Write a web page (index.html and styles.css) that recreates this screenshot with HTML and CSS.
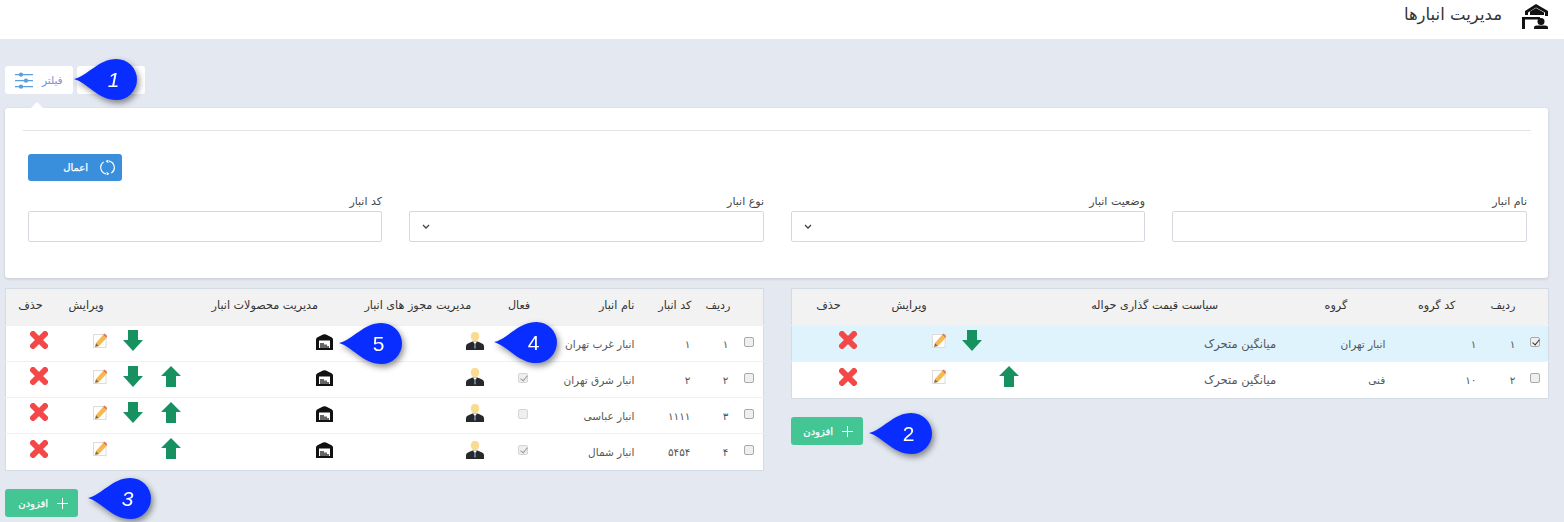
FILE: index.html
```html
<!DOCTYPE html>
<html lang="fa" dir="rtl">
<head>
    <meta charset="UTF-8" />
    <title>مدیریت انبارها</title>
    <link rel="stylesheet" href="styles.css">
</head>
<body>
    <svg class="sprites" aria-hidden="true">
        <symbol id="i-down" viewBox="0 0 20 21"><path d="M5 0h10v10h5L10 21 0 10h5z" fill="#16915f"/></symbol>
        <symbol id="i-up" viewBox="0 0 20 21"><path d="M10 0l10 10h-5v11H5V10H0z" fill="#16915f"/></symbol>
        <symbol id="i-del" viewBox="0 0 18 18"><path d="M3 3l12 12M15 3L3 15" stroke="#f44848" stroke-width="6" stroke-linecap="round"/></symbol>
        <symbol id="i-edit" viewBox="0 0 14 15">
            <rect x=".5" y="1.500" width="12.500" height="13" fill="#fff" stroke="#dcdcdc"/>
            <path d="M3 10l7-8 3.500 3-7.500 8z" fill="#f6b94e"/>
            <path d="M10 2l1.500-1.500L14 3l-.5 2z" fill="#e8744a"/>
            <path d="M3 10l-1 4 4-1z" fill="#8a6a3a"/>
        </symbol>
        <symbol id="i-user" viewBox="0 0 18 18">
            <ellipse cx="9" cy="4.500" rx="4.200" ry="4.800" fill="#f8dc92"/>
            <path d="M0 18v-4q0-2 3-3l3.500-1.500h5L15 11q3 1 3 3v4z" fill="#26282b"/>
            <path d="M7 9.500h4l-2 3z" fill="#fff"/>
            <path d="M8.300 11.500h1.400l.3 4-1 1.500-1-1.500z" fill="#6d84a8"/>
        </symbol>
        <symbol id="i-store" viewBox="0 0 17 16">
            <path d="M0 5.500Q0 4 1.500 3.300L7 .5q1.500-.7 3 0l5.500 2.800Q17 4 17 5.500V16H0z" fill="#111"/>
            <path d="M3 6.500h11V14H3z" fill="#fff"/>
            <path d="M4 9h4v1.500h3V12h2v2H4z" fill="#666"/>
        </symbol>
    </svg>

    <header class="topbar">
        <svg class="topbar-icon" viewBox="0 0 27 26" fill="#111">
            <path d="M3 12V8l11-7 12 7v5h-3V9.500L14 4.500 6 9.500V12z"/>
            <path d="M8 8.500L14 5l8 4.500V12H8z"/>
            <path d="M0 14h18v2.500H3V26H0z"/>
            <circle cx="19" cy="18.500" r="3.500"/>
            <path d="M12 26v-1.500q0-2 3-2h8q3 0 3 2V26z"/>
        </svg>
        <h1 class="topbar-title">مدیریت انبارها</h1>
    </header>

    <main class="content">
        <div class="tabs">
            <a class="tab tab-filter">
                <svg class="tab-icon" viewBox="0 0 18 17" fill="#5aa0e0">
                    <path d="M0 2h18v1.200H0zM0 8h18v1.200H0zM0 14h18v1.200H0z"/>
                    <circle cx="6" cy="2.600" r="2.200"/><circle cx="11" cy="8.600" r="2.200"/><circle cx="6" cy="14.600" r="2.200"/>
                </svg>
                <span>فیلتر</span>
            </a>
            <a class="tab"></a>
        </div>

        <section class="panel">
            <hr class="panel-line">
            <div class="panel-actions">
                <button class="btn btn-apply">
                    <svg class="btn-icon" viewBox="0 0 16 16" fill="none" stroke="#fff" stroke-width="1.200">
                        <path d="M9.500 1.200A7 7 0 0 1 12 14M6.500 14.800A7 7 0 0 1 4 2"/>
                        <path d="M9 0l-2 1.300 2 1.500M7 16l2-1.300-2-1.500"/>
                    </svg>
                    <span>اعمال</span>
                </button>
            </div>
            <form class="filters">
                <label class="field">نام انبار<input type="text"></label>
                <label class="field">وضعیت انبار<select></select></label>
                <label class="field">نوع انبار<select></select></label>
                <label class="field">کد انبار<input type="text"></label>
            </form>
        </section>

        <div class="columns">
            <section class="col">
                <table class="grid grid-groups">
                    <colgroup>
                        <col class="w28"><col class="w40"><col class="w90"><col class="w110"><col class="w250"><col class="w40"><col class="w40"><col class="w90"><col class="w68">
                    </colgroup>
                    <thead>
                        <tr>
                            <th></th>
                            <th class="pr5">ردیف</th>
                            <th class="pr25">کد گروه</th>
                            <th class="pr43">گروه</th>
                            <th class="pr62">سیاست قیمت گذاری حواله</th>
                            <th></th>
                            <th></th>
                            <th class="pr23">ویرایش</th>
                            <th class="pr19">حذف</th>
                        </tr>
                    </thead>
                    <tbody>
                        <tr class="selected">
                            <td class="pr8"><input type="checkbox" class="check" checked></td>
                            <td class="pr5">۱</td>
                            <td class="pr4">۱</td>
                            <td class="pr5">انبار تهران</td>
                            <td class="pr4 policy">میانگین متحرک</td>
                            <td></td>
                            <td class="pr8"><svg class="ico-arrow"><use href="#i-down"/></svg></td>
                            <td class="pr4"><svg class="ico-edit"><use href="#i-edit"/></svg></td>
                            <td class="pr3"><svg class="ico-del"><use href="#i-del"/></svg></td>
                        </tr>
                        <tr>
                            <td class="pr8"><input type="checkbox" class="check"></td>
                            <td class="pr5">۲</td>
                            <td class="pr4">۱۰</td>
                            <td class="pr5">فنی</td>
                            <td class="pr4 policy">میانگین متحرک</td>
                            <td class="pr11"><svg class="ico-arrow"><use href="#i-up"/></svg></td>
                            <td></td>
                            <td class="pr4"><svg class="ico-edit"><use href="#i-edit"/></svg></td>
                            <td class="pr3"><svg class="ico-del"><use href="#i-del"/></svg></td>
                        </tr>
                    </tbody>
                </table>
                <div class="add-row">
                    <button class="btn btn-add btn-add-narrow"><span class="plus"></span><span>افزودن</span></button>
                </div>
            </section>

            <section class="col">
                <table class="grid grid-stores">
                    <colgroup>
                        <col class="w28"><col class="w35"><col class="w60"><col class="w100"><col class="w50"><col class="w150"><col class="w155"><col class="w35"><col class="w38"><col class="w57"><col class="w49">
                    </colgroup>
                    <thead>
                        <tr>
                            <th></th>
                            <th class="pr5">ردیف</th>
                            <th class="pr9">کد انبار</th>
                            <th class="pr6">نام انبار</th>
                            <th class="pr10">فعال</th>
                            <th class="pr19">مدیریت مجوز های انبار</th>
                            <th class="pr22">مدیریت محصولات انبار</th>
                            <th></th>
                            <th></th>
                            <th class="pr8">ویرایش</th>
                            <th class="pr12">حذف</th>
                        </tr>
                    </thead>
                    <tbody>
                        <tr>
                            <td class="pr9"><input type="checkbox" class="check"></td>
                            <td class="pr7">۱</td>
                            <td class="pr10">۱</td>
                            <td class="pr6">انبار غرب تهران</td>
                            <td class="pr12"></td>
                            <td class="pr6"><svg class="ico-user"><use href="#i-user"/></svg></td>
                            <td class="pr7"><svg class="ico-store"><use href="#i-store"/></svg></td>
                            <td></td>
                            <td class="pr7"><svg class="ico-arrow"><use href="#i-down"/></svg></td>
                            <td class="pr5"><svg class="ico-edit"><use href="#i-edit"/></svg></td>
                            <td class="pr7"><svg class="ico-del"><use href="#i-del"/></svg></td>
                        </tr>
                        <tr>
                            <td class="pr9"><input type="checkbox" class="check"></td>
                            <td class="pr7">۲</td>
                            <td class="pr10">۲</td>
                            <td class="pr6">انبار شرق تهران</td>
                            <td class="pr12"><input type="checkbox" class="check check-off" checked disabled></td>
                            <td class="pr6"><svg class="ico-user"><use href="#i-user"/></svg></td>
                            <td class="pr7"><svg class="ico-store"><use href="#i-store"/></svg></td>
                            <td class="pr4"><svg class="ico-arrow"><use href="#i-up"/></svg></td>
                            <td class="pr7"><svg class="ico-arrow"><use href="#i-down"/></svg></td>
                            <td class="pr5"><svg class="ico-edit"><use href="#i-edit"/></svg></td>
                            <td class="pr7"><svg class="ico-del"><use href="#i-del"/></svg></td>
                        </tr>
                        <tr>
                            <td class="pr9"><input type="checkbox" class="check"></td>
                            <td class="pr7">۳</td>
                            <td class="pr10">۱۱۱۱</td>
                            <td class="pr6">انبار عباسی</td>
                            <td class="pr12"><input type="checkbox" class="check check-off" disabled></td>
                            <td class="pr6"><svg class="ico-user"><use href="#i-user"/></svg></td>
                            <td class="pr7"><svg class="ico-store"><use href="#i-store"/></svg></td>
                            <td class="pr4"><svg class="ico-arrow"><use href="#i-up"/></svg></td>
                            <td class="pr7"><svg class="ico-arrow"><use href="#i-down"/></svg></td>
                            <td class="pr5"><svg class="ico-edit"><use href="#i-edit"/></svg></td>
                            <td class="pr7"><svg class="ico-del"><use href="#i-del"/></svg></td>
                        </tr>
                        <tr>
                            <td class="pr9"><input type="checkbox" class="check"></td>
                            <td class="pr7">۴</td>
                            <td class="pr10">۵۴۵۴</td>
                            <td class="pr6">انبار شمال</td>
                            <td class="pr12"><input type="checkbox" class="check check-off" checked disabled></td>
                            <td class="pr6"><svg class="ico-user"><use href="#i-user"/></svg></td>
                            <td class="pr7"><svg class="ico-store"><use href="#i-store"/></svg></td>
                            <td class="pr4"><svg class="ico-arrow"><use href="#i-up"/></svg></td>
                            <td></td>
                            <td class="pr5"><svg class="ico-edit"><use href="#i-edit"/></svg></td>
                            <td class="pr7"><svg class="ico-del"><use href="#i-del"/></svg></td>
                        </tr>
                    </tbody>
                </table>
                <div class="add-row">
                    <button class="btn btn-add"><span class="plus"></span><span>افزودن</span></button>
                </div>
            </section>
        </div>
    </main>

    <!-- numbered help markers over the page -->
    <div class="marker m1"><svg viewBox="0 0 63 41"><path d="M0 20C14 17 24 0 42.500 0a20.500 20.500 0 0 1 0 41C24 41 14 24 0 20z"/></svg><b class="slant">1</b></div>
    <div class="marker m2"><svg viewBox="0 0 63 41"><path d="M0 20C14 17 24 0 42.500 0a20.500 20.500 0 0 1 0 41C24 41 14 24 0 20z"/></svg><b>2</b></div>
    <div class="marker m3"><svg viewBox="0 0 63 41"><path d="M0 20C14 17 24 0 42.500 0a20.500 20.500 0 0 1 0 41C24 41 14 24 0 20z"/></svg><b class="slant">3</b></div>
    <div class="marker m4"><svg viewBox="0 0 63 41"><path d="M0 20C14 17 24 0 42.500 0a20.500 20.500 0 0 1 0 41C24 41 14 24 0 20z"/></svg><b>4</b></div>
    <div class="marker m5"><svg viewBox="0 0 63 41"><path d="M0 20C14 17 24 0 42.500 0a20.500 20.500 0 0 1 0 41C24 41 14 24 0 20z"/></svg><b>5</b></div>
</body>
</html>
```
FILE: styles.css
```css
* {
    box-sizing: border-box;
}

body {
    margin: 0;
    height: 522px;
    overflow: hidden;
    position: relative;
    background: #e4e8f0;
    color: #444;
    font-family: "DejaVu Sans", "Noto Sans", sans-serif;
    font-size: 10px;
}

.sprites {
    display: none;
}

.topbar {
    display: flex;
    align-items: flex-start;
    gap: 20px;
    height: 39px;
    padding: 3px 15px 0 0;
    background: #fff;
}

.topbar-icon {
    width: 27px;
    height: 26px;
}

.topbar-title {
    margin: 2px 0 0;
    font-size: 16.500px;
    font-weight: normal;
    color: #333;
}

.content {
    padding: 27px 15px 0 5px;
}

.tabs {
    display: flex;
    justify-content: flex-end;
    flex-direction: row-reverse;
    direction: ltr;
    gap: 4px;
}

.tab {
    display: flex;
    align-items: center;
    gap: 9px;
    width: 68px;
    height: 28px;
    padding-left: 10px;
    background: #fff;
    border-radius: 3px;
    color: #6f8fdc;
    font-size: 10.500px;
}

.tab-filter {
    position: relative;
    order: 2;
}

.tab-filter::after {
    content: "";
    position: absolute;
    left: 26px;
    top: 36px;
    border: 6px solid transparent;
    border-top: 0;
    border-bottom-color: #fff;
}

.tab-icon {
    width: 18px;
    height: 17px;
}

.panel {
    margin-top: 14px;
    height: 170px;
    padding: 22px 17px 0 18px;
    background: #fff;
    border-radius: 3px;
    margin-right: 1px;
    box-shadow: 0 1px 3px rgba(0, 0, 0, .15);
}

.panel-line {
    margin: 0;
    border: 0;
    border-top: 1px solid #e3e3e3;
}

.panel-actions {
    display: flex;
    justify-content: flex-end;
    margin: 23px 0 0;
    padding-left: 5px;
}

.btn {
    display: flex;
    align-items: center;
    direction: rtl;
    border: 0;
    border-radius: 3px;
    color: #fff;
    font-family: inherit;
    font-size: 10px;
    font-weight: normal;
    -webkit-text-stroke: .25px #fff;
    padding: 0;
}

.btn-apply {
    width: 94px;
    height: 27px;
    gap: 12px;
    padding-right: 7px;
    background: #3a8fdc;
}

.btn-icon {
    width: 15px;
    height: 15px;
}

.filters {
    display: grid;
    grid-template-columns: 355px 354px 355px 354px;
    column-gap: 27px;
    margin-top: 11px;
    padding: 0 4px 0 5px;
}

.field {
    display: block;
    font-size: 11px;
    line-height: 19px;
}

.field input,
.field select {
    display: block;
    width: 100%;
    height: 31px;
    border: 1px solid #d5d9df;
    border-radius: 2px;
    background-color: #fff;
    appearance: none;
}

.field select {
    background-image: url("data:image/svg+xml,%3Csvg xmlns='http://www.w3.org/2000/svg' width='8' height='5'%3E%3Cpath d='M1 1l3 3 3-3' fill='none' stroke='%23444' stroke-width='1.300'/%3E%3C/svg%3E");
    background-repeat: no-repeat;
    background-position: left 12px center;
}

.columns {
    display: grid;
    grid-template-columns: 758px 759px;
    column-gap: 27px;
    margin-top: 10px;
}

.grid {
    width: 100%;
    table-layout: fixed;
    border-collapse: collapse;
    background: #fff;
    border: 1px solid #d4dbe2;
}

.grid th,
.grid td {
    padding: 0;
    text-align: right;
    white-space: nowrap;
}

.grid th {
    height: 37px;
    background: #f2f2f2;
    font-size: 11.200px;
    font-weight: normal;
    color: #333;
    padding-bottom: 4px;
}

.grid td {
    height: 36px;
    border-top: 1px solid #f0f0f0;
    color: #555;
    font-size: 10.500px;
}

.grid td.policy {
    font-size: 11.500px;
}

.grid tr:last-child td {
    height: 37px;
}

.grid svg {
    display: block;
}

.selected td {
    background: #dff3fd;
}

.grid-groups td svg,
.grid-stores td svg {
    margin-bottom: 7px;
}

.ico-arrow {
    width: 20px;
    height: 21px;
}

.ico-edit {
    width: 14px;
    height: 15px;
}

.ico-del {
    width: 18px;
    height: 18px;
}

.grid-stores td .ico-user {
    width: 18px;
    height: 18px;
    margin-bottom: 5px;
}

.grid-stores td .ico-store {
    width: 17px;
    height: 16px;
    margin-bottom: 4px;
}

.check {
    display: block;
    appearance: none;
    width: 10px;
    height: 10px;
    margin: 0 0 4px;
    border: 1px solid #aaa;
    border-radius: 2px;
    background: #efefef;
    position: relative;
}

.check:checked::after {
    content: "";
    position: absolute;
    left: 2.500px;
    top: 0;
    width: 3px;
    height: 6px;
    border: solid #333;
    border-width: 0 1.500px 1.500px 0;
    transform: rotate(40deg);
}

.check-off {
    border-color: #d5d5d5;
}

.check-off:checked::after {
    border-color: #999;
}

.add-row {
    display: flex;
    justify-content: flex-end;
    margin-top: 18px;
}

.btn-add {
    width: 73px;
    height: 28px;
    gap: 9px;
    padding-right: 10px;
    background: #43c694;
}

.btn-add-narrow {
    width: 72px;
}

.plus {
    position: relative;
    width: 11px;
    height: 11px;
    background:
        linear-gradient(#fff, #fff) center / 11px 1px no-repeat,
        linear-gradient(#fff, #fff) center / 1px 11px no-repeat;
}

/* w and pr helper classes, the columns of the two tables are measured by hand */
.w28 { width: 28px; }
.w35 { width: 35px; }
.w38 { width: 38px; }
.w40 { width: 40px; }
.w49 { width: 49px; }
.w50 { width: 50px; }
.w57 { width: 57px; }
.w60 { width: 60px; }
.w68 { width: 68px; }
.w90 { width: 90px; }
.w100 { width: 100px; }
.w110 { width: 110px; }
.w150 { width: 150px; }
.w155 { width: 155px; }
.w250 { width: 250px; }

.grid .pr3 { padding-right: 3px; }
.grid .pr4 { padding-right: 4px; }
.grid .pr5 { padding-right: 5px; }
.grid .pr6 { padding-right: 6px; }
.grid .pr7 { padding-right: 7px; }
.grid .pr8 { padding-right: 8px; }
.grid .pr9 { padding-right: 9px; }
.grid .pr10 { padding-right: 10px; }
.grid .pr11 { padding-right: 11px; }
.grid .pr12 { padding-right: 12px; }
.grid .pr19 { padding-right: 19px; }
.grid .pr22 { padding-right: 22px; }
.grid .pr23 { padding-right: 23px; }
.grid .pr25 { padding-right: 25px; }
.grid .pr43 { padding-right: 43px; }
.grid .pr62 { padding-right: 62px; }

.marker {
    position: absolute;
    width: 63px;
    height: 41px;
    direction: ltr;
    filter: drop-shadow(2px 3px 3px rgba(0, 0, 0, .45));
}

.marker svg {
    display: block;
    width: 63px;
    height: 41px;
    fill: #0a2dff;
}

.marker b {
    position: absolute;
    left: 19px;
    top: 0;
    width: 41px;
    line-height: 41px;
    text-align: center;
    color: #fff;
    font-family: "Liberation Sans", sans-serif;
    font-size: 21px;
    font-weight: normal;
}

.marker .slant {
    font-style: italic;
}

.m1 { left: 74px; top: 59px; }
.m2 { left: 869px; top: 413px; }
.m3 { left: 88px; top: 478px; }
.m4 { left: 494px; top: 322px; }
.m5 { left: 339px; top: 323px; }
```
